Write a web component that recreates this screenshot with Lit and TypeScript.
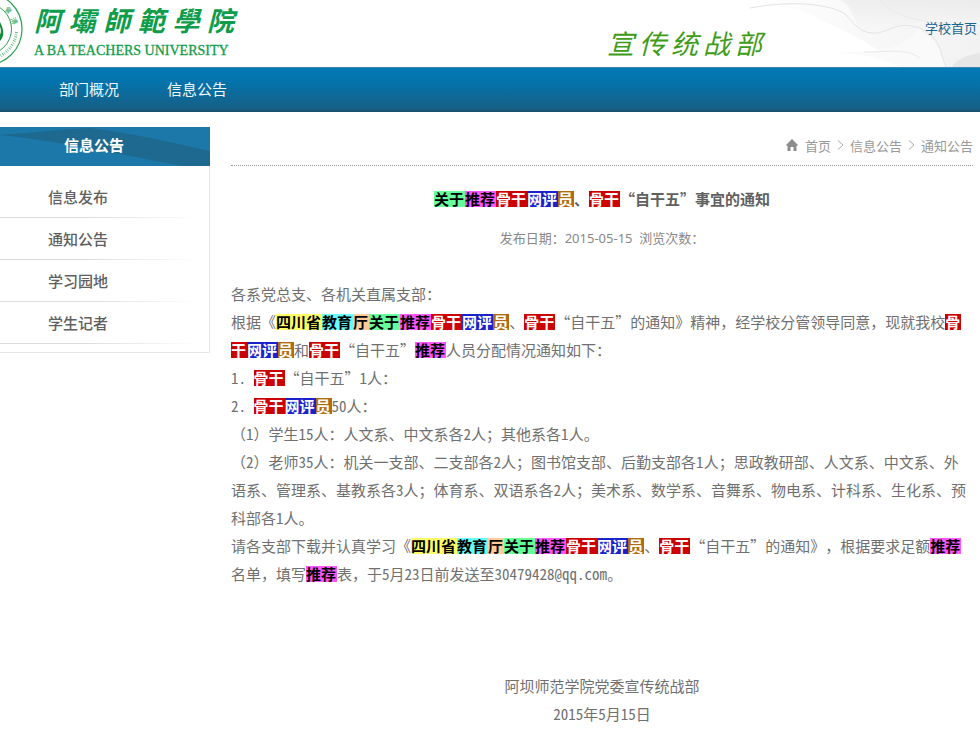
import { LitElement, html, css, svg } from "lit";
import { customElement } from "lit/decorators.js";

type Part = string | [tone: string, text: string];

const NAV = ["部门概况", "信息公告"];
const SIDE = ["信息发布", "通知公告", "学习园地", "学生记者"];

const REC: Part = ["magenta", "推荐"];
const CORE: Part = ["red", "骨干"];
const REVIEWER: Part[] = [CORE, ["blue", "网评"], ["ochre", "员"]];
const NOTICE: Part[] = [
  ["yellow", "四川省"], ["cyan", "教育"], ["peach", "厅"], ["green", "关于"],
  REC, ...REVIEWER, "、", CORE, "“自干五”的通知》",
];

/* Each paragraph is a list of lines; each line is a list of parts. */
const PARAGRAPHS: Part[][][] = [
  [["各系党总支、各机关直属支部："]],
  [
    ["根据《", ...NOTICE, "精神，经学校分管领导同意，现就我校", ["red", "骨"]],
    [["red", "干"], ["blue", "网评"], ["ochre", "员"], "和", CORE, "“自干五”", REC, "人员分配情况通知如下："],
  ],
  [["1. ", CORE, "“自干五”1人："]],
  [["2. ", ...REVIEWER, "50人："]],
  [["（1）学生15人：人文系、中文系各2人；其他系各1人。"]],
  [
    ["（2）老师35人：机关一支部、二支部各2人；图书馆支部、后勤支部各1人；思政教研部、人文系、中文系、外"],
    ["语系、管理系、基教系各3人；体育系、双语系各2人；美术系、数学系、音舞系、物电系、计科系、生化系、预"],
    ["科部各1人。"],
  ],
  [
    ["请各支部下载并认真学习《", ...NOTICE, "，根据要求足额", REC],
    ["名单，填写", REC, "表，于5月23日前发送至30479428@qq.com。"],
  ],
];

/* Latin letters and digits take half the width of a Chinese character. */
const mixed = (text: string) =>
  text.split(/([\x20-\x7e]+)/).map((t, i) => (i % 2 ? html`<span class="half">${t}</span>` : t));

const part = (p: Part) =>
  typeof p === "string" ? mixed(p) : html`<mark class=${p[0]}>${p[1]}</mark>`;

@customElement("site-header")
export class SiteHeader extends LitElement {
  static styles = css`
    :host { display: block; }
    a { text-decoration: none; }
    .banner {
      position: relative;
      display: flex;
      align-items: flex-start;
      height: 67px;
      background: #fff;
    }
    .smoke { position: absolute; right: 0; top: 0; width: 480px; height: 67px; }
    .seal { flex: none; width: 34px; height: 67px; }
    .brand { display: flex; flex-direction: column; width: 200px; color: #0f9d4c; }
    .school {
      display: flex;
      justify-content: space-between;
      font: italic 700 27px/40px "Noto Sans CJK TC", sans-serif;
    }
    .english { font: 14px/22px "Liberation Serif", serif; white-space: nowrap; -webkit-text-stroke: 0.3px; }
    .dept {
      position: relative;
      display: flex;
      gap: 5px;
      margin: 23px 163px 0 auto;
      color: #3f9c18;
      font: italic 27px/40px "Noto Sans CJK SC", sans-serif;
    }
    .home { position: relative; margin: 18px 3px 0 0; color: #1b6591; font-size: 13px; line-height: 20px; }
    nav {
      box-sizing: border-box;
      display: flex;
      gap: 48px;
      height: 45px;
      padding-left: 59px;
      border-top: 1px solid #3c85ab;
      border-bottom: 2px solid #1a5372;
      background: linear-gradient(#0279b5, #0573ab 35%, #175f83);
    }
    nav a { color: #eef7fc; font-size: 15px; line-height: 41px; }
  `;

  render() {
    return html`
      <div class="banner">
        <svg class="smoke" viewBox="0 0 480 67" preserveAspectRatio="none" aria-hidden="true">
          <defs>
            <linearGradient id="fade"><stop offset="0" stop-color="#fff" /><stop offset="1" stop-color="#ececec" /></linearGradient>
            <linearGradient id="veil" x2="0" y2="1"><stop offset="0" stop-color="#e9e9e9" /><stop offset="1" stop-color="#f8f8f8" /></linearGradient>
          </defs>
          ${svg`
            <path d="M250 0H480V67H400C370 40 330 24 300 10Z" fill="url(#fade)" opacity=".7" />
            <path d="M340 0C355 5 350 24 368 32C390 38 402 14 480 20V0Z" fill="url(#veil)" opacity=".7" />
            <path d="M418 30C438 38 440 52 446 67H400C372 54 346 52 330 54C360 48 390 60 418 30Z" fill="#fafafa" />
            <path d="M452 67C458 57 470 55 480 53V67Z" fill="#e6e6e6" />
            <path d="M250 8C292 0 330 4 345 14C358 28 362 34 378 33C396 28 398 22 420 28C442 38 440 54 446 67" fill="none" stroke="#e4e4e4" />
            <path d="M380 0C392 16 420 24 480 26M364 52C390 52 405 48 420 58" fill="none" stroke="#eaeaea" />
          `}
        </svg>
        <svg class="seal" viewBox="0 0 34 67" aria-hidden="true">
          <g fill="none" stroke="#2fa257">
            <circle cx="-14" cy="29" r="36" stroke-width="1.2" />
            <circle cx="-14" cy="29" r="25.5" />
          </g>
          <path d="M0 22C4 29 5 37-1 42V36C2 33 1 28-1 25Z" fill="#128c3c" />
          <g fill="#2fa257" font-family="Noto Sans CJK TC, sans-serif" font-size="7">
            <text transform="translate(4 10) rotate(38)">會</text>
            <text transform="translate(10 19) rotate(62)">溥</text>
          </g>
          <path d="M16.500 32A30.500 30.500 0 0 1 0 56" fill="none" stroke="#5fb87c" stroke-width="3" stroke-dasharray="1 1.600 .6 1.200" />
        </svg>
        <div class="brand">
          <div class="school">${[..."阿壩師範學院"].map((c) => html`<span>${c}</span>`)}</div>
          <div class="english">A BA TEACHERS UNIVERSITY</div>
        </div>
        <div class="dept">${[..."宣传统战部"].map((c) => html`<span>${c}</span>`)}</div>
        <a class="home" href="#">学校首页</a>
      </div>
      <nav>${NAV.map((n) => html`<a href="#">${n}</a>`)}</nav>
    `;
  }
}

@customElement("side-menu")
export class SideMenu extends LitElement {
  static styles = css`
    :host { display: block; }
    h2 {
      position: relative;
      height: 39px;
      margin: 0;
      padding-left: 64px;
      background: #1c78a9;
      color: #fff;
      font-size: 15px;
      line-height: 35px;
    }
    .sweep { position: absolute; inset: 0; width: 100%; height: 100%; }
    .label { position: relative; }
    ul {
      margin: 0;
      padding: 10px 0 8px;
      list-style: none;
      border: solid #e6e6e6;
      border-width: 0 1px 1px 0;
    }
    li {
      padding-bottom: 1px;
      background: linear-gradient(90deg, #dcdcdc 40%, #fff 95%) bottom / 100% 1px no-repeat;
    }
    a {
      display: block;
      padding-left: 48px;
      color: #606060;
      font-size: 15px;
      font-weight: 500;
      line-height: 41px;
      text-decoration: none;
    }
  `;

  render() {
    return html`
      <h2>
        <svg class="sweep" viewBox="0 0 210 39" preserveAspectRatio="none" aria-hidden="true">
          <path d="M0 8C30 6 60 2 90 1C130 6 170 15 210 24V39H182C120 27 60 14 0 8Z" fill="#1d6990" />
        </svg>
        <span class="label">信息公告</span>
      </h2>
      <ul>${SIDE.map((s) => html`<li><a href="#">${s}</a></li>`)}</ul>
    `;
  }
}

@customElement("notice-article")
export class NoticeArticle extends LitElement {
  static styles = css`
    :host { display: block; min-width: 0; text-spacing-trim: space-all; }
    .crumbs {
      box-sizing: border-box;
      display: flex;
      justify-content: flex-end;
      align-items: center;
      height: 39px;
      padding-bottom: 2px;
      border-bottom: 1px dotted #999;
      color: #999;
      font-size: 13px;
    }
    .crumbs a { color: inherit; text-decoration: none; }
    .house { width: 12px; height: 12px; margin-right: 7px; }
    .arrow { width: 7px; height: 10px; margin: 0 6px; }
    h1 {
      margin: 19px 0 0;
      color: #606060;
      font-size: 15px;
      line-height: 28px;
      text-align: center;
    }
    .meta {
      margin: 15px 0 32px;
      color: #888;
      font: 13px/20px "Noto Sans", "Noto Sans CJK SC", sans-serif;
      text-align: center;
      white-space: pre;
    }
    p {
      margin: 0;
      color: #707070;
      font-size: 15px;
      line-height: 28px;
      white-space: pre;
    }
    .half { font-feature-settings: "hwid"; }
    .sign { margin-top: 84px; text-align: center; }
    mark {
      display: inline-block;
      height: 16px;
      padding-right: 1px;
      font-weight: 700;
      line-height: 16px;
    }
    .yellow { background: #ffff66; color: #000; }
    .cyan { background: #66ffff; color: #000; }
    .peach { background: #ffcc99; color: #000; }
    .green { background: #66ff99; color: #000; }
    .magenta { background: #ff55ff; color: #000; }
    .red { background: #cc0000; color: #fff; }
    .blue { background: #1a22cc; color: #fff; }
    .ochre { background: #b06c10; color: #fff; }
  `;

  render() {
    const arrow = html`<svg class="arrow" viewBox="0 0 7 10" aria-hidden="true">
      <path d="M1 .5 6 5 1 9.500" fill="none" stroke="#aaa" />
    </svg>`;
    const title: Part[] = [["green", "关于"], REC, ...REVIEWER, "、", CORE, "“自干五”事宜的通知"];
    return html`
      <div class="crumbs">
        <svg class="house" viewBox="0 0 12 12" aria-hidden="true">
          <path d="M6 0 12 6 11 7 10.500 6.500V12H7.500V8H4.500V12H1.500V6.500L1 7 0 6Z" fill="#8c8c8c" />
        </svg>
        <a href="#">首页</a>${arrow}<a href="#">信息公告</a>${arrow}<a href="#">通知公告</a>
      </div>
      <h1>${title.map(part)}</h1>
      <div class="meta">发布日期：2015-05-15  浏览次数：</div>
      ${PARAGRAPHS.map((lines) => html`<p>${lines.map((l, i) => html`${i ? html`<br />` : ""}${l.map(part)}`)}</p>`)}
      <p class="sign">${mixed("阿坝师范学院党委宣传统战部")}<br />${mixed("2015年5月15日")}</p>
    `;
  }
}

@customElement("app-root")
export class AppRoot extends LitElement {
  static styles = css`
    :host {
      display: block;
      background: #fff;
      font-family: "Noto Sans CJK SC", sans-serif;
    }
    main {
      display: grid;
      grid-template-columns: 210px minmax(0, 1fr);
      align-items: start;
      gap: 21px;
      padding: 15px 7px 0 0;
    }
  `;

  render() {
    return html`
      <site-header lang="zh-CN"></site-header>
      <main lang="zh-CN">
        <side-menu></side-menu>
        <notice-article></notice-article>
      </main>
    `;
  }
}
